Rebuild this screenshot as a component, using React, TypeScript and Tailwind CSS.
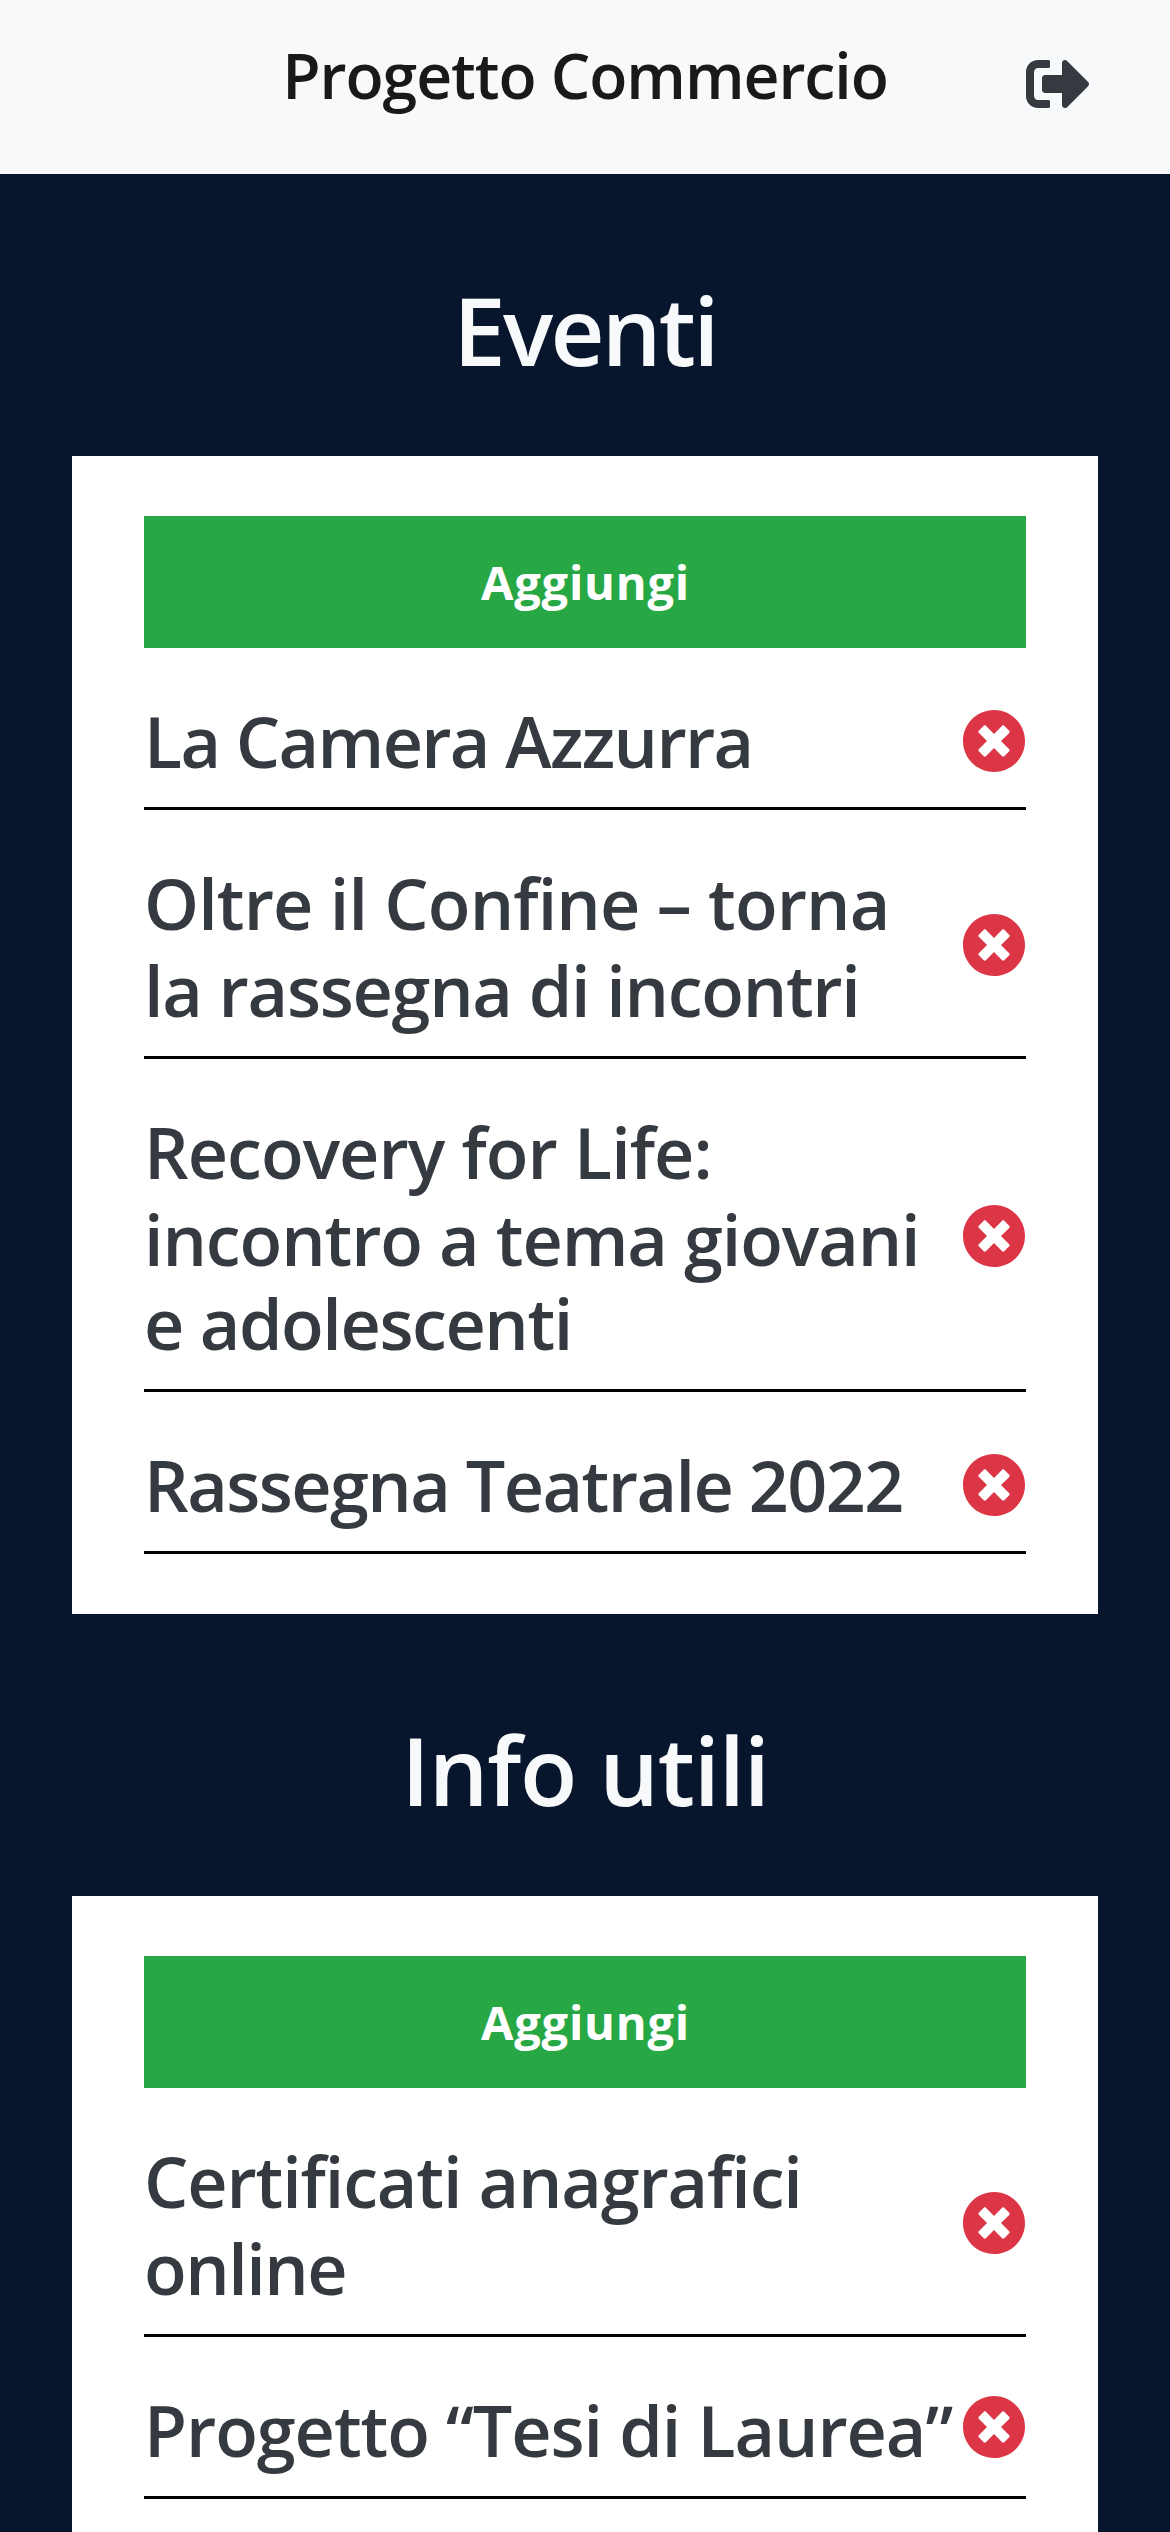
import React from "react";
import { FaSignOutAlt, FaTimesCircle } from "react-icons/fa";

type Line = { text: string; tracking: string };
type Item = { lines: Line[]; icon: string };
type Section = { title: string; tracking: string; items: Item[] };

const sections: Section[] = [
  {
    title: "Eventi",
    tracking: "tracking-[-2.7px]",
    items: [
      { icon: "mb-0", lines: [{ text: "La Camera Azzurra", tracking: "tracking-[-1.66px]" }] },
      {
        icon: "mb-[3px]",
        lines: [
          { text: "Oltre il Confine – torna", tracking: "tracking-[-0.88px]" },
          { text: "la rassegna di incontri", tracking: "tracking-[-1.25px]" },
        ],
      },
      {
        icon: "mb-[3px]",
        lines: [
          { text: "Recovery for Life:", tracking: "tracking-[-0.96px]" },
          { text: "incontro a tema giovani", tracking: "tracking-[-1.07px]" },
          { text: "e adolescenti", tracking: "tracking-[-1.41px]" },
        ],
      },
      { icon: "mb-0", lines: [{ text: "Rassegna Teatrale 2022", tracking: "tracking-[-1.56px]" }] },
    ],
  },
  {
    title: "Info utili",
    tracking: "tracking-[-1.2px]",
    items: [
      {
        icon: "mb-[3px]",
        lines: [
          { text: "Certificati anagrafici", tracking: "tracking-[-1.11px]" },
          { text: "online", tracking: "tracking-[-1.51px]" },
        ],
      },
      { icon: "mb-[6px]", lines: [{ text: "Progetto “Tesi di Laurea”", tracking: "tracking-[-1.04px]" }] },
    ],
  },
];

function ItemRow({ lines, icon }: Item) {
  return (
    <li className="flex items-center justify-between border-b-[3px] border-black pt-[50px] pb-[23px]">
      <h3 className="flex min-w-0 flex-col gap-px text-[70px] leading-[86px] font-semibold whitespace-nowrap text-[#343a40]">
        {lines.map((line, i) => (
          <span key={line.text} className={i === 2 ? `-mt-[3px] ${line.tracking}` : line.tracking}>
            {line.text}
          </span>
        ))}
      </h3>
      <FaTimesCircle className={`size-16 shrink-0 text-[#dc3545] ${icon}`} />
    </li>
  );
}

export default function App() {
  return (
    <div className="h-[2532px] w-full overflow-hidden bg-[#07162c] font-['Open_Sans',sans-serif]">
      <header className="relative flex h-[174px] items-start justify-center bg-[#f8f9fa]">
        <h1 className="mt-8 text-[62.5px] leading-[85px] font-semibold tracking-[-1.06px] text-[#191919]">
          Progetto Commercio
        </h1>
        <FaSignOutAlt className="absolute top-[52px] right-20 size-16 text-[#343a40]" />
      </header>
      {sections.map((section) => (
        <section key={section.title} className="px-[72px]">
          <h2 className="pt-[92px] pb-[62px] text-center text-[94px] leading-[128px] font-semibold text-[#f8f9fa]">
            <span className={section.tracking}>{section.title}</span>
          </h2>
          <div className="bg-white px-[72px] py-[60px]">
            <button className="block h-[132px] w-full bg-[#28a745] pl-px text-[47px] leading-[64px] font-bold tracking-[0.8px] text-white">
              Aggiungi
            </button>
            <ul>
              {section.items.map((item) => (
                <ItemRow key={item.lines[0].text} {...item} />
              ))}
            </ul>
          </div>
        </section>
      ))}
    </div>
  );
}
